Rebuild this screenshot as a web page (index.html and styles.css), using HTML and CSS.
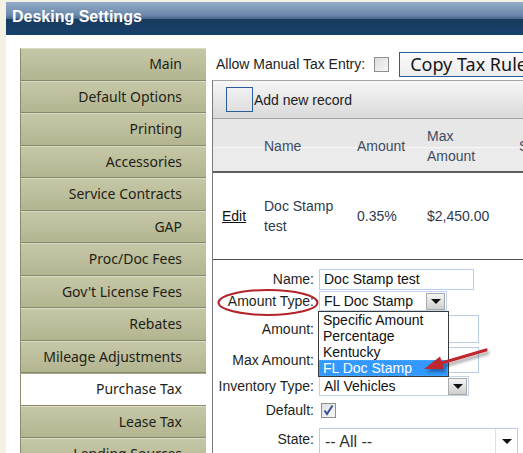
FILE: index.html
```html
<!DOCTYPE html>
<html>
<head>
<meta charset="utf-8">
<title>Desking Settings</title>
<link rel="stylesheet" href="styles.css">
</head>
<body>
<div class="window">
  <div class="titlebar">Desking Settings</div>
  <div class="layout">
    <nav class="tabs">
      <div class="tab">Main</div>
      <div class="tab">Default Options</div>
      <div class="tab">Printing</div>
      <div class="tab">Accessories</div>
      <div class="tab">Service Contracts</div>
      <div class="tab">GAP</div>
      <div class="tab">Proc/Doc Fees</div>
      <div class="tab">Gov't License Fees</div>
      <div class="tab">Rebates</div>
      <div class="tab">Mileage Adjustments</div>
      <div class="tab active">Purchase Tax</div>
      <div class="tab">Lease Tax</div>
      <div class="tab">Lending Sources</div>
    </nav>
    <main class="content">
      <div class="topbar">
        <span class="toplabel">Allow Manual Tax Entry:</span>
        <span class="checkbox"></span>
        <span class="copybtn">Copy Tax Rules</span>
      </div>
      <div class="grid">
        <div class="toolbar"><span class="addicon"></span><span>Add new record</span></div>
        <div class="thead">
          <div class="cell"></div>
          <div class="cell">Name</div>
          <div class="cell">Amount</div>
          <div class="cell">Max<br>Amount</div>
          <div class="cell">State</div>
        </div>
        <div class="trow">
          <div class="cell first"><a class="edit">Edit</a></div>
          <div class="cell">Doc Stamp<br>test</div>
          <div class="cell">0.35%</div>
          <div class="cell">$2,450.00</div>
          <div class="cell"></div>
        </div>
        <div class="form">
          <label class="lbl">Name:</label>
          <div class="field"><span class="input name-in">Doc Stamp test</span></div>
          <label class="lbl">Amount Type:</label>
          <div class="field"><span class="select type-sel"><span class="val">FL Doc Stamp</span><span class="arrowbtn"><span class="tri"></span></span></span></div>
          <label class="lbl">Amount:</label>
          <div class="field"><span class="input amt-in"></span></div>
          <label class="lbl">Max Amount:</label>
          <div class="field"><span class="input max-in"></span></div>
          <label class="lbl">Inventory Type:</label>
          <div class="field"><span class="select inv-sel"><span class="val">All Vehicles</span><span class="arrowbtn"><span class="tri"></span></span></span></div>
          <label class="lbl">Default:</label>
          <div class="field"><span class="checkbox checked"><svg width="13" height="13" viewBox="0 0 13 13"><path d="M2.5 6.5 L5 10 L10.5 1.5" fill="none" stroke="#3b4f9a" stroke-width="2"/></svg></span></div>
          <label class="lbl">State:</label>
          <div class="field"><span class="combo state-sel"><span class="val">-- All --</span><span class="combobtn"><span class="tri"></span></span></span></div>
        </div>
      </div>
    </main>
  </div>
</div>

<ul class="dropdown">
  <li>Specific Amount</li>
  <li>Percentage</li>
  <li>Kentucky</li>
  <li class="hl">FL Doc Stamp</li>
</ul>

<svg class="annot" width="523" height="453" viewBox="0 0 523 453">
  <defs>
    <filter id="sh" x="-20%" y="-50%" width="140%" height="200%">
      <feGaussianBlur in="SourceAlpha" stdDeviation="1.5"/>
      <feOffset dx="2" dy="3"/>
      <feComponentTransfer><feFuncA type="linear" slope="0.35"/></feComponentTransfer>
      <feMerge><feMergeNode/><feMergeNode in="SourceGraphic"/></feMerge>
    </filter>
  </defs>
  <ellipse cx="268" cy="302.5" rx="49.5" ry="12.5" fill="none" stroke="#b3232a" stroke-width="2"/>
  <g filter="url(#sh)">
    <line x1="486" y1="350" x2="440" y2="363.5" stroke="#c0272d" stroke-width="3.2" stroke-linecap="round"/>
    <polygon points="424,369 440,356.5 444,369" fill="#c0272d"/>
  </g>
</svg>
</body>
</html>
```
FILE: styles.css
```css
html, body {
  margin: 0;
  padding: 0;
}
body {
  width: 523px;
  height: 453px;
  overflow: hidden;
  background: #f3f1e2;
  font-family: "Liberation Sans", Arial, sans-serif;
  position: relative;
}
.window {
  margin: 2px 0 0 6px;
  background: #ffffff;
  height: 451px;
  overflow: hidden;
}
.titlebar {
  height: 33px;
  background: linear-gradient(#93abc8 0%, #6b88ab 40%, #4c6a90 50%, #1a3a5e 52%, #17416d 100%);
  color: #ffffff;
  font-weight: bold;
  font-size: 16px;
  line-height: 30px;
  padding-left: 6px;
}
.layout {
  display: flex;
  padding: 13px 0 0 14px;
}
.tabs {
  width: 186px;
  flex: none;
}
.tab {
  box-sizing: border-box;
  height: 32.5px;
  border-top: 1px solid #dcdcc4;
  border-bottom: 1px solid #87886a;
  border-left: 1px solid #8a8b6d;
  background: linear-gradient(#c6c7a6, #b3b591);
  font-family: "Noto Sans", "Open Sans", sans-serif;
  font-size: 14px;
  color: #1e1e16;
  text-align: right;
  padding-right: 24px;
  line-height: 30px;
}
.tab.active {
  background: #ffffff;
  border-top-color: #a9aa8c;
}
.content {
  flex: 1;
  padding-left: 6px;
  min-width: 0;
}
.topbar {
  height: 32px;
  display: flex;
  align-items: center;
  white-space: nowrap;
}
.toplabel {
  font-size: 14px;
  color: #222;
  margin-left: 4px;
  flex: none;
}
.checkbox {
  display: inline-block;
  flex: none;
  box-sizing: border-box;
  width: 15px;
  height: 15px;
  border: 1px solid #8f8f8f;
  background: linear-gradient(135deg, #dcdcdc, #f8f8f8);
  margin-left: 9px;
  position: relative;
}
.checkbox.checked {
  margin-left: 2px;
  background: linear-gradient(135deg, #e0e0e0, #f8f8f8);
}
.checkbox svg {
  position: absolute;
  left: 0;
  top: 0;
}
.copybtn {
  margin-left: 10px;
  box-sizing: border-box;
  height: 25px;
  border: 1px solid #2d5d9c;
  background: linear-gradient(#fbfbfb, #ececec);
  font-family: "Noto Sans", "Open Sans", sans-serif;
  font-size: 18px;
  line-height: 22px;
  padding-left: 10px;
  color: #161616;
  flex: none;
  width: 160px;
}
.grid {
  border-left: 1px solid #7a7a7a;
  border-top: 1px solid #a4a4a4;
}
.toolbar {
  height: 37px;
  background: linear-gradient(#f6f6f6, #d9d9d9);
  border-bottom: 1px solid #a2a2a2;
  display: flex;
  align-items: center;
  font-size: 14px;
  color: #1d1d1d;
}
.addicon {
  box-sizing: border-box;
  width: 27px;
  height: 25px;
  border: 1px solid #2b5b9a;
  margin-left: 13px;
  margin-right: 1px;
}
.thead, .trow {
  display: grid;
  grid-template-columns: 51px 93px 70px 92px 1fr;
}
.thead {
  height: 52px;
  background: linear-gradient(#e7e7e7 0, #e7e7e7 28px, #f7f7f7 28px, #f7f7f7 29px, #ebebeb 29px);
  border-bottom: 2px solid #5e5e5e;
  color: #3d4b63;
  font-size: 14px;
  line-height: 20px;
}
.thead .cell {
  display: flex;
  align-items: center;
  padding-top: 2px;
  white-space: nowrap;
}
.trow {
  height: 86px;
  border-bottom: 1px solid #4f4f4f;
  font-size: 14px;
  line-height: 20px;
  color: #2f3a4c;
}
.trow .cell {
  display: flex;
  align-items: center;
  white-space: nowrap;
}
.trow .first {
  padding-left: 9px;
}
.edit {
  color: #111;
  text-decoration: underline;
}
.form {
  display: grid;
  grid-template-columns: 101px 1fr;
  grid-template-rows: 22px 22px 34px 28px 24px 24px 34px;
  column-gap: 5px;
  padding-top: 8px;
  font-size: 14px;
  color: #1f1f1f;
}
.lbl {
  text-align: right;
  align-self: center;
  white-space: nowrap;
}
.field {
  display: flex;
  align-items: center;
}
.input {
  box-sizing: border-box;
  display: block;
  border: 1px solid #b7cde9;
  background: #fff;
  font-size: 14px;
  line-height: 19px;
  padding-left: 4px;
  color: #111;
}
.name-in { width: 155px; height: 21px; }
.amt-in { width: 160px; height: 28px; }
.max-in { width: 160px; height: 26px; }
.select {
  box-sizing: border-box;
  display: flex;
  align-items: center;
  border: 1px solid #c2d3ea;
  background: #fff;
  font-size: 14px;
  color: #111;
  padding-left: 4px;
  position: relative;
}
.select .val { flex: 1; white-space: nowrap; }
.type-sel { width: 128px; height: 20px; }
.inv-sel { width: 150px; height: 20px; }
.arrowbtn {
  box-sizing: border-box;
  width: 19px;
  height: 17px;
  margin-right: 1px;
  border: 1px solid #a9a9a9;
  background: linear-gradient(#f5f5f5, #cfcfcf);
  display: flex;
  align-items: center;
  justify-content: center;
}
.tri {
  width: 0;
  height: 0;
  border-left: 5px solid transparent;
  border-right: 5px solid transparent;
  border-top: 5px solid #111;
}
.combo {
  box-sizing: border-box;
  display: flex;
  align-items: center;
  width: 199px;
  height: 28px;
  margin-top: 5px;
  border: 1px solid #b7cde9;
  background: #fff;
  font-size: 16px;
  color: #333;
  padding-left: 5px;
}
.combo .val { flex: 1; white-space: nowrap; }
.combobtn {
  width: 21px;
  height: 26px;
  border-left: 1px solid #d8e2ee;
  display: flex;
  align-items: center;
  justify-content: center;
}
.dropdown {
  position: absolute;
  left: 318px;
  top: 311px;
  width: 131px;
  box-sizing: border-box;
  margin: 0;
  padding: 0;
  list-style: none;
  border: 1px solid #3a3a3a;
  background: #fff;
  font-size: 14px;
  color: #111;
}
.dropdown li {
  height: 16px;
  line-height: 16px;
  padding-left: 4px;
  white-space: nowrap;
}
.dropdown li.hl {
  background: #3399ff;
  color: #ffffff;
  outline: 1px dotted #e38d2e;
  outline-offset: -1px;
}
.annot {
  position: absolute;
  left: 0;
  top: 0;
  pointer-events: none;
}
```
